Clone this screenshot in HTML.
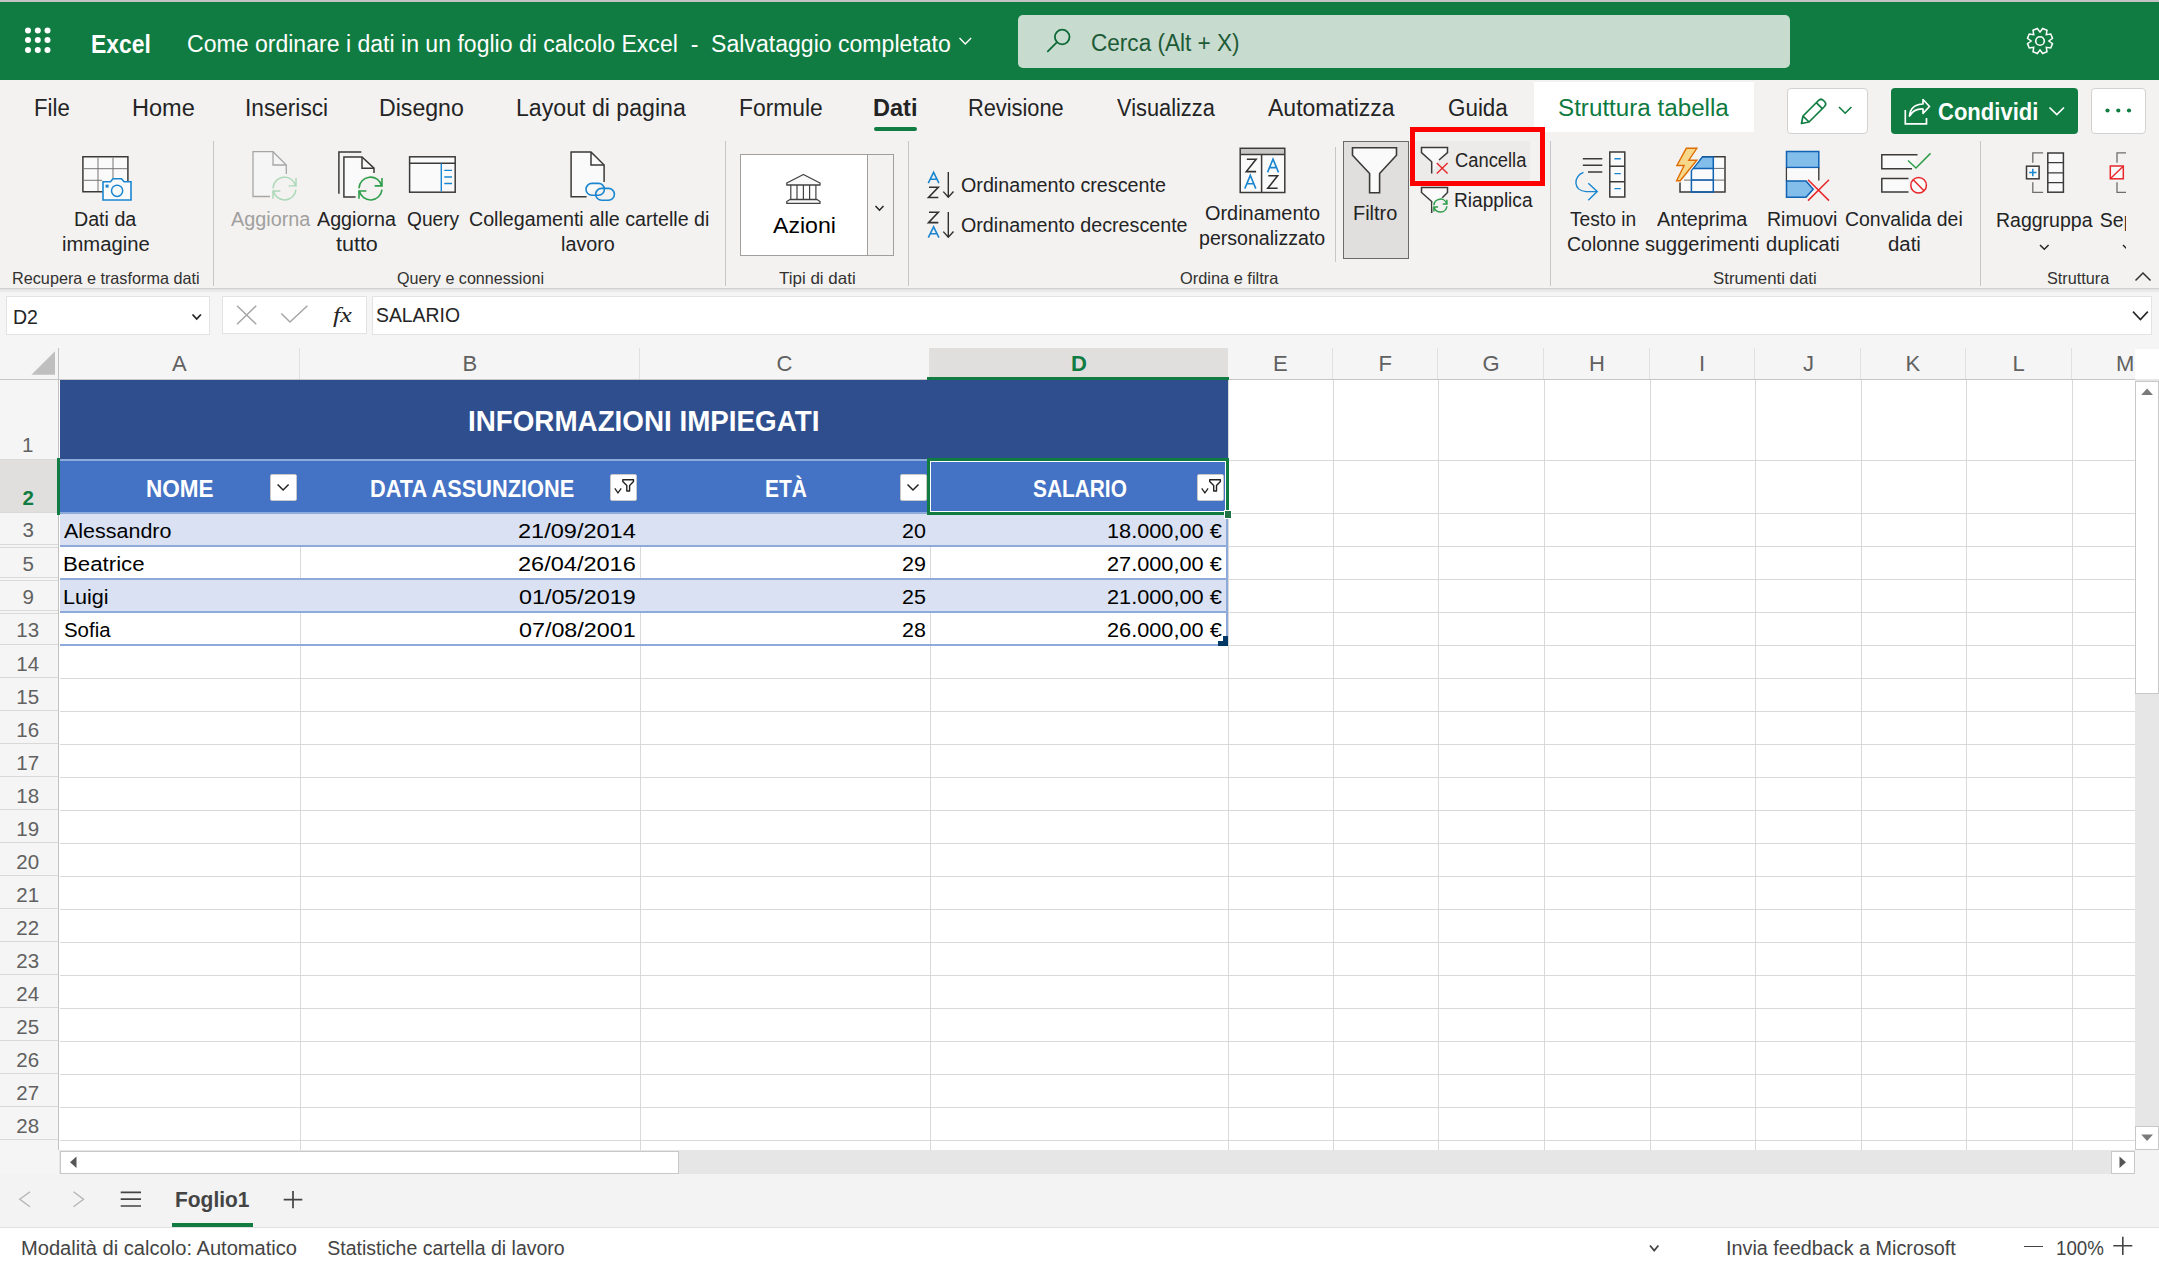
<!DOCTYPE html><html><head><meta charset="utf-8"><title>Excel</title><style>
html,body{margin:0;padding:0;width:2159px;height:1263px;overflow:hidden;background:#fff;}
body{position:relative;font-family:"Liberation Sans",sans-serif;}
.t{position:absolute;white-space:pre;line-height:1;}
svg{overflow:visible}
</style></head><body>
<div style="position:absolute;left:0px;top:0px;width:2159px;height:2px;background:#c4c2c2"></div>
<div style="position:absolute;left:0px;top:2px;width:2159px;height:79px;background:#107c41"></div>
<div class="t" style="left:91.08px;top:32.03px;font-size:25px;color:#fff;font-weight:700;transform:scaleX(0.9150);transform-origin:0 0;">Excel</div>
<div class="t" style="left:187.00px;top:32.53px;font-size:23px;color:#fff;font-weight:400;transform:scaleX(1.0024);transform-origin:0 0;">Come ordinare i dati in un foglio di calcolo Excel&nbsp;&nbsp;-&nbsp;&nbsp;Salvataggio completato</div>
<div style="position:absolute;left:1018px;top:15px;width:772px;height:53px;background:#c7dbcf;border-radius:5px"></div>
<div class="t" style="left:1091.02px;top:31.63px;font-size:23px;color:#1d5a36;font-weight:400;transform:scaleX(0.9813);transform-origin:0 0;">Cerca (Alt + X)</div>
<div style="position:absolute;left:0px;top:80px;width:2159px;height:209px;background:#f3f2f1"></div>
<div style="position:absolute;left:0px;top:288px;width:2159px;height:1px;background:#d2d0ce"></div>
<div style="position:absolute;left:0px;top:289px;width:2159px;height:4px;background:linear-gradient(#e0e0e0,#f5f5f5)"></div>
<div class="t" style="left:34.04px;top:97.23px;font-size:23px;color:#242424;font-weight:400;transform:scaleX(0.9640);transform-origin:0 0;">File</div>
<div class="t" style="left:131.98px;top:97.23px;font-size:23px;color:#242424;font-weight:400;transform:scaleX(1.0242);transform-origin:0 0;">Home</div>
<div class="t" style="left:245.03px;top:97.23px;font-size:23px;color:#242424;font-weight:400;transform:scaleX(0.9847);transform-origin:0 0;">Inserisci</div>
<div class="t" style="left:379.00px;top:97.23px;font-size:23px;color:#242424;font-weight:400;transform:scaleX(1.0049);transform-origin:0 0;">Disegno</div>
<div class="t" style="left:515.99px;top:97.23px;font-size:23px;color:#242424;font-weight:400;transform:scaleX(1.0059);transform-origin:0 0;">Layout di pagina</div>
<div class="t" style="left:739.01px;top:97.23px;font-size:23px;color:#242424;font-weight:400;transform:scaleX(0.9932);transform-origin:0 0;">Formule</div>
<div class="t" style="left:968.05px;top:97.23px;font-size:23px;color:#242424;font-weight:400;transform:scaleX(0.9475);transform-origin:0 0;">Revisione</div>
<div class="t" style="left:1117.00px;top:97.23px;font-size:23px;color:#242424;font-weight:400;transform:scaleX(0.9483);transform-origin:0 0;">Visualizza</div>
<div class="t" style="left:1268.00px;top:97.23px;font-size:23px;color:#242424;font-weight:400;">Automatizza</div>
<div class="t" style="left:1448.03px;top:97.23px;font-size:23px;color:#242424;font-weight:400;transform:scaleX(0.9739);transform-origin:0 0;">Guida</div>
<div class="t" style="left:872.98px;top:97.23px;font-size:23px;color:#242424;font-weight:700;transform:scaleX(1.0229);transform-origin:0 0;">Dati</div>
<div style="position:absolute;left:874px;top:127px;width:43px;height:4px;background:#107c41;border-radius:2px"></div>
<div style="position:absolute;left:1534px;top:82px;width:220px;height:50px;background:#fff"></div>
<div class="t" style="left:1557.95px;top:97.23px;font-size:23px;color:#0e7a3f;font-weight:400;transform:scaleX(1.0521);transform-origin:0 0;">Struttura tabella</div>
<div style="position:absolute;left:1787px;top:88px;width:81px;height:46px;background:#fff;border:1px solid #d1d1d1;border-radius:4px;box-sizing:border-box"></div>
<div style="position:absolute;left:1891px;top:88px;width:187px;height:46px;background:#107c41;border-radius:4px"></div>
<div class="t" style="left:1938.00px;top:101.23px;font-size:23px;color:#fff;font-weight:700;transform:scaleX(0.9576);transform-origin:0 0;">Condividi</div>
<div style="position:absolute;left:2091px;top:88px;width:55px;height:46px;background:#fff;border:1px solid #d1d1d1;border-radius:4px;box-sizing:border-box"></div>
<div style="position:absolute;left:213px;top:141px;width:1px;height:145px;background:#c8c6c4"></div>
<div style="position:absolute;left:725px;top:141px;width:1px;height:145px;background:#c8c6c4"></div>
<div style="position:absolute;left:908px;top:141px;width:1px;height:145px;background:#c8c6c4"></div>
<div style="position:absolute;left:1335px;top:147px;width:1px;height:115px;background:#c8c6c4"></div>
<div style="position:absolute;left:1550px;top:141px;width:1px;height:145px;background:#c8c6c4"></div>
<div style="position:absolute;left:1980px;top:141px;width:1px;height:145px;background:#c8c6c4"></div>
<div class="t" style="left:12.02px;top:270.43px;font-size:16.5px;color:#323130;font-weight:400;transform:scaleX(0.9837);transform-origin:0 0;">Recupera e trasforma dati</div>
<div class="t" style="left:396.70px;top:270.33px;font-size:16.5px;color:#323130;font-weight:400;transform:scaleX(0.9770);transform-origin:0 0;">Query e connessioni</div>
<div class="t" style="left:779.00px;top:270.33px;font-size:16.5px;color:#323130;font-weight:400;transform:scaleX(1.0281);transform-origin:0 0;">Tipi di dati</div>
<div class="t" style="left:1179.50px;top:270.33px;font-size:16.5px;color:#323130;font-weight:400;transform:scaleX(0.9924);transform-origin:0 0;">Ordina e filtra</div>
<div class="t" style="left:1713.00px;top:270.33px;font-size:16.5px;color:#323130;font-weight:400;transform:scaleX(1.0185);transform-origin:0 0;">Strumenti dati</div>
<div class="t" style="left:2046.60px;top:270.03px;font-size:16.5px;color:#323130;font-weight:400;transform:scaleX(0.9844);transform-origin:0 0;">Struttura</div>
<div class="t" style="left:74.29px;top:209.59px;font-size:19.5px;color:#242424;font-weight:400;transform:scaleX(1.0075);transform-origin:0 0;">Dati da</div>
<div class="t" style="left:61.96px;top:234.59px;font-size:19.5px;color:#242424;font-weight:400;transform:scaleX(1.0377);transform-origin:0 0;">immagine</div>
<div class="t" style="left:231.00px;top:209.59px;font-size:19.5px;color:#a19f9d;font-weight:400;transform:scaleX(1.0165);transform-origin:0 0;">Aggiorna</div>
<div class="t" style="left:317.00px;top:209.59px;font-size:19.5px;color:#242424;font-weight:400;transform:scaleX(1.0101);transform-origin:0 0;">Aggiorna</div>
<div class="t" style="left:335.80px;top:234.59px;font-size:19.5px;color:#242424;font-weight:400;transform:scaleX(1.1024);transform-origin:0 0;">tutto</div>
<div class="t" style="left:406.60px;top:209.59px;font-size:19.5px;color:#242424;font-weight:400;transform:scaleX(0.9822);transform-origin:0 0;">Query</div>
<div class="t" style="left:468.50px;top:209.59px;font-size:19.5px;color:#242424;font-weight:400;transform:scaleX(1.0079);transform-origin:0 0;">Collegamenti alle cartelle di</div>
<div class="t" style="left:560.99px;top:234.59px;font-size:19.5px;color:#242424;font-weight:400;transform:scaleX(1.0140);transform-origin:0 0;">lavoro</div>
<div style="position:absolute;left:740px;top:154px;width:154px;height:102px;background:#fff;border:1px solid #a19f9d;box-sizing:border-box"></div>
<div style="position:absolute;left:867px;top:155px;width:26px;height:100px;background:#f3f2f1;border-left:1px solid #a19f9d;box-sizing:border-box"></div>
<div class="t" style="left:773.00px;top:215.47px;font-size:22px;color:#000;font-weight:400;transform:scaleX(1.0503);transform-origin:0 0;">Azioni</div>
<div class="t" style="left:961.00px;top:175.89px;font-size:19.5px;color:#242424;font-weight:400;transform:scaleX(1.0107);transform-origin:0 0;">Ordinamento crescente</div>
<div class="t" style="left:961.00px;top:216.19px;font-size:19.5px;color:#242424;font-weight:400;transform:scaleX(1.0097);transform-origin:0 0;">Ordinamento decrescente</div>
<div class="t" style="left:1204.80px;top:204.19px;font-size:19.5px;color:#242424;font-weight:400;transform:scaleX(1.0206);transform-origin:0 0;">Ordinamento</div>
<div class="t" style="left:1199.00px;top:229.19px;font-size:19.5px;color:#242424;font-weight:400;transform:scaleX(1.0040);transform-origin:0 0;">personalizzato</div>
<div style="position:absolute;left:1343px;top:141px;width:66px;height:118px;background:#e1dfdd;border:1px solid #6b6b6b;box-sizing:border-box"></div>
<div class="t" style="left:1353.28px;top:204.19px;font-size:19.5px;color:#242424;font-weight:400;transform:scaleX(1.0215);transform-origin:0 0;">Filtro</div>
<div style="position:absolute;left:1414px;top:141px;width:116px;height:39px;background:#edebe9"></div>
<div class="t" style="left:1455.00px;top:151.19px;font-size:19.5px;color:#242424;font-weight:400;transform:scaleX(0.9404);transform-origin:0 0;">Cancella</div>
<div class="t" style="left:1454.02px;top:191.39px;font-size:19.5px;color:#242424;font-weight:400;transform:scaleX(0.9790);transform-origin:0 0;">Riapplica</div>
<div style="position:absolute;left:1410px;top:127px;width:135px;height:59px;border:5px solid #ff0000;box-sizing:border-box"></div>
<div class="t" style="left:1570.40px;top:209.59px;font-size:19.5px;color:#242424;font-weight:400;transform:scaleX(0.9841);transform-origin:0 0;">Testo in</div>
<div class="t" style="left:1567.00px;top:234.59px;font-size:19.5px;color:#242424;font-weight:400;">Colonne</div>
<div class="t" style="left:1657.30px;top:209.59px;font-size:19.5px;color:#242424;font-weight:400;transform:scaleX(1.0143);transform-origin:0 0;">Anteprima</div>
<div class="t" style="left:1645.00px;top:234.59px;font-size:19.5px;color:#242424;font-weight:400;transform:scaleX(1.0242);transform-origin:0 0;">suggerimenti</div>
<div class="t" style="left:1767.00px;top:209.59px;font-size:19.5px;color:#242424;font-weight:400;">Rimuovi</div>
<div class="t" style="left:1765.60px;top:234.59px;font-size:19.5px;color:#242424;font-weight:400;transform:scaleX(1.0307);transform-origin:0 0;">duplicati</div>
<div class="t" style="left:1845.40px;top:209.59px;font-size:19.5px;color:#242424;font-weight:400;transform:scaleX(0.9964);transform-origin:0 0;">Convalida dei</div>
<div class="t" style="left:1888.00px;top:234.59px;font-size:19.5px;color:#242424;font-weight:400;transform:scaleX(1.0448);transform-origin:0 0;">dati</div>
<div class="t" style="left:1996.00px;top:210.89px;font-size:19.5px;color:#242424;font-weight:400;">Raggruppa</div>
<div style="position:absolute;left:2090px;top:200px;width:36px;height:40px;overflow:hidden">
<div class="t" style="left:9.80px;top:10.89px;font-size:19.5px;color:#242424;font-weight:400;">Separa</div>
</div>
<div style="position:absolute;left:0px;top:293px;width:2159px;height:56px;background:#f5f5f5"></div>
<div style="position:absolute;left:6px;top:296px;width:204px;height:39px;background:#fff;border:1px solid #e3e3e3;box-sizing:border-box"></div>
<div class="t" style="left:12.90px;top:308.19px;font-size:19.5px;color:#242424;font-weight:400;">D2</div>
<div style="position:absolute;left:222px;top:296px;width:145px;height:38px;background:#fff;border:1px solid #e3e3e3;box-sizing:border-box"></div>
<div class="t" style="left:332.80px;top:303.77px;font-size:22px;color:#242424;font-weight:400;font-family:'Liberation Serif';font-style:italic;transform:scaleX(1.1854);transform-origin:0 0;">fx</div>
<div style="position:absolute;left:372px;top:296px;width:1780px;height:39px;background:#fff;border:1px solid #e3e3e3;box-sizing:border-box"></div>
<div class="t" style="left:376.30px;top:304.97px;font-size:20px;color:#242424;font-weight:400;transform:scaleX(0.9682);transform-origin:0 0;">SALARIO</div>
<div style="position:absolute;left:0px;top:349px;width:2135px;height:30px;background:#f5f5f5"></div>
<div style="position:absolute;left:0px;top:380px;width:58px;height:770px;background:#f5f5f5"></div>
<div style="position:absolute;left:59px;top:380px;width:2076px;height:770px;background:#fff"></div>
<div style="position:absolute;left:930px;top:348px;width:297px;height:31px;background:#e1dfdd"></div>
<div style="position:absolute;left:0px;top:460px;width:58px;height:52px;background:#e1dfdd"></div>
<div style="position:absolute;left:300px;top:380px;width:1px;height:770px;background:#d9d9d9"></div>
<div style="position:absolute;left:299px;top:348px;width:1px;height:31px;background:#e0e0e0"></div>
<div style="position:absolute;left:640px;top:380px;width:1px;height:770px;background:#d9d9d9"></div>
<div style="position:absolute;left:639px;top:348px;width:1px;height:31px;background:#e0e0e0"></div>
<div style="position:absolute;left:930px;top:380px;width:1px;height:770px;background:#d9d9d9"></div>
<div style="position:absolute;left:929px;top:348px;width:1px;height:31px;background:#e0e0e0"></div>
<div style="position:absolute;left:1228px;top:380px;width:1px;height:770px;background:#d9d9d9"></div>
<div style="position:absolute;left:1227px;top:348px;width:1px;height:31px;background:#e0e0e0"></div>
<div style="position:absolute;left:1333px;top:380px;width:1px;height:770px;background:#d9d9d9"></div>
<div style="position:absolute;left:1332px;top:348px;width:1px;height:31px;background:#e0e0e0"></div>
<div style="position:absolute;left:1438px;top:380px;width:1px;height:770px;background:#d9d9d9"></div>
<div style="position:absolute;left:1437px;top:348px;width:1px;height:31px;background:#e0e0e0"></div>
<div style="position:absolute;left:1544px;top:380px;width:1px;height:770px;background:#d9d9d9"></div>
<div style="position:absolute;left:1543px;top:348px;width:1px;height:31px;background:#e0e0e0"></div>
<div style="position:absolute;left:1650px;top:380px;width:1px;height:770px;background:#d9d9d9"></div>
<div style="position:absolute;left:1649px;top:348px;width:1px;height:31px;background:#e0e0e0"></div>
<div style="position:absolute;left:1755px;top:380px;width:1px;height:770px;background:#d9d9d9"></div>
<div style="position:absolute;left:1754px;top:348px;width:1px;height:31px;background:#e0e0e0"></div>
<div style="position:absolute;left:1861px;top:380px;width:1px;height:770px;background:#d9d9d9"></div>
<div style="position:absolute;left:1860px;top:348px;width:1px;height:31px;background:#e0e0e0"></div>
<div style="position:absolute;left:1966px;top:380px;width:1px;height:770px;background:#d9d9d9"></div>
<div style="position:absolute;left:1965px;top:348px;width:1px;height:31px;background:#e0e0e0"></div>
<div style="position:absolute;left:2072px;top:380px;width:1px;height:770px;background:#d9d9d9"></div>
<div style="position:absolute;left:2071px;top:348px;width:1px;height:31px;background:#e0e0e0"></div>
<div style="position:absolute;left:60px;top:460px;width:2075px;height:1px;background:#d9d9d9"></div>
<div style="position:absolute;left:0px;top:459px;width:58px;height:1px;background:#d9d9d9"></div>
<div style="position:absolute;left:60px;top:513px;width:2075px;height:1px;background:#d9d9d9"></div>
<div style="position:absolute;left:0px;top:512px;width:58px;height:1px;background:#d9d9d9"></div>
<div style="position:absolute;left:60px;top:546px;width:2075px;height:1px;background:#d9d9d9"></div>
<div style="position:absolute;left:0px;top:545px;width:58px;height:1px;background:#d9d9d9"></div>
<div style="position:absolute;left:60px;top:579px;width:2075px;height:1px;background:#d9d9d9"></div>
<div style="position:absolute;left:0px;top:578px;width:58px;height:1px;background:#d9d9d9"></div>
<div style="position:absolute;left:60px;top:612px;width:2075px;height:1px;background:#d9d9d9"></div>
<div style="position:absolute;left:0px;top:611px;width:58px;height:1px;background:#d9d9d9"></div>
<div style="position:absolute;left:60px;top:645px;width:2075px;height:1px;background:#d9d9d9"></div>
<div style="position:absolute;left:0px;top:644px;width:58px;height:1px;background:#d9d9d9"></div>
<div style="position:absolute;left:60px;top:678px;width:2075px;height:1px;background:#d9d9d9"></div>
<div style="position:absolute;left:0px;top:677px;width:58px;height:1px;background:#d9d9d9"></div>
<div style="position:absolute;left:60px;top:711px;width:2075px;height:1px;background:#d9d9d9"></div>
<div style="position:absolute;left:0px;top:710px;width:58px;height:1px;background:#d9d9d9"></div>
<div style="position:absolute;left:60px;top:744px;width:2075px;height:1px;background:#d9d9d9"></div>
<div style="position:absolute;left:0px;top:743px;width:58px;height:1px;background:#d9d9d9"></div>
<div style="position:absolute;left:60px;top:777px;width:2075px;height:1px;background:#d9d9d9"></div>
<div style="position:absolute;left:0px;top:776px;width:58px;height:1px;background:#d9d9d9"></div>
<div style="position:absolute;left:60px;top:810px;width:2075px;height:1px;background:#d9d9d9"></div>
<div style="position:absolute;left:0px;top:809px;width:58px;height:1px;background:#d9d9d9"></div>
<div style="position:absolute;left:60px;top:843px;width:2075px;height:1px;background:#d9d9d9"></div>
<div style="position:absolute;left:0px;top:842px;width:58px;height:1px;background:#d9d9d9"></div>
<div style="position:absolute;left:60px;top:876px;width:2075px;height:1px;background:#d9d9d9"></div>
<div style="position:absolute;left:0px;top:875px;width:58px;height:1px;background:#d9d9d9"></div>
<div style="position:absolute;left:60px;top:909px;width:2075px;height:1px;background:#d9d9d9"></div>
<div style="position:absolute;left:0px;top:908px;width:58px;height:1px;background:#d9d9d9"></div>
<div style="position:absolute;left:60px;top:942px;width:2075px;height:1px;background:#d9d9d9"></div>
<div style="position:absolute;left:0px;top:941px;width:58px;height:1px;background:#d9d9d9"></div>
<div style="position:absolute;left:60px;top:975px;width:2075px;height:1px;background:#d9d9d9"></div>
<div style="position:absolute;left:0px;top:974px;width:58px;height:1px;background:#d9d9d9"></div>
<div style="position:absolute;left:60px;top:1008px;width:2075px;height:1px;background:#d9d9d9"></div>
<div style="position:absolute;left:0px;top:1007px;width:58px;height:1px;background:#d9d9d9"></div>
<div style="position:absolute;left:60px;top:1041px;width:2075px;height:1px;background:#d9d9d9"></div>
<div style="position:absolute;left:0px;top:1040px;width:58px;height:1px;background:#d9d9d9"></div>
<div style="position:absolute;left:60px;top:1074px;width:2075px;height:1px;background:#d9d9d9"></div>
<div style="position:absolute;left:0px;top:1073px;width:58px;height:1px;background:#d9d9d9"></div>
<div style="position:absolute;left:60px;top:1107px;width:2075px;height:1px;background:#d9d9d9"></div>
<div style="position:absolute;left:0px;top:1106px;width:58px;height:1px;background:#d9d9d9"></div>
<div style="position:absolute;left:60px;top:1140px;width:2075px;height:1px;background:#d9d9d9"></div>
<div style="position:absolute;left:0px;top:1139px;width:58px;height:1px;background:#d9d9d9"></div>
<div style="position:absolute;left:0px;top:544px;width:58px;height:1px;background:#d9d9d9"></div>
<div style="position:absolute;left:0px;top:547px;width:58px;height:1px;background:#d9d9d9"></div>
<div style="position:absolute;left:0px;top:545px;width:58px;height:2px;background:#f5f5f5"></div>
<div style="position:absolute;left:0px;top:577px;width:58px;height:1px;background:#d9d9d9"></div>
<div style="position:absolute;left:0px;top:580px;width:58px;height:1px;background:#d9d9d9"></div>
<div style="position:absolute;left:0px;top:578px;width:58px;height:2px;background:#f5f5f5"></div>
<div style="position:absolute;left:0px;top:610px;width:58px;height:1px;background:#d9d9d9"></div>
<div style="position:absolute;left:0px;top:613px;width:58px;height:1px;background:#d9d9d9"></div>
<div style="position:absolute;left:0px;top:611px;width:58px;height:2px;background:#f5f5f5"></div>
<div style="position:absolute;left:58px;top:348px;width:1px;height:802px;background:#c2c2c2"></div>
<div style="position:absolute;left:0px;top:379px;width:2135px;height:1px;background:#c6c6c6"></div>
<div class="t" style="left:172.00px;top:352.87px;font-size:22px;color:#616161;font-weight:400;">A</div>
<div class="t" style="left:462.50px;top:352.87px;font-size:22px;color:#616161;font-weight:400;">B</div>
<div class="t" style="left:776.50px;top:352.87px;font-size:22px;color:#616161;font-weight:400;">C</div>
<div class="t" style="left:1071.00px;top:352.87px;font-size:22px;color:#107c41;font-weight:700;">D</div>
<div class="t" style="left:1273.00px;top:352.87px;font-size:22px;color:#616161;font-weight:400;">E</div>
<div class="t" style="left:1378.50px;top:352.87px;font-size:22px;color:#616161;font-weight:400;">F</div>
<div class="t" style="left:1482.50px;top:352.87px;font-size:22px;color:#616161;font-weight:400;">G</div>
<div class="t" style="left:1589.00px;top:352.87px;font-size:22px;color:#616161;font-weight:400;">H</div>
<div class="t" style="left:1699.00px;top:352.87px;font-size:22px;color:#616161;font-weight:400;">I</div>
<div class="t" style="left:1803.00px;top:352.87px;font-size:22px;color:#616161;font-weight:400;">J</div>
<div class="t" style="left:1905.50px;top:352.87px;font-size:22px;color:#616161;font-weight:400;">K</div>
<div class="t" style="left:2012.50px;top:352.87px;font-size:22px;color:#616161;font-weight:400;">L</div>
<div class="t" style="left:2116.00px;top:352.87px;font-size:22px;color:#616161;font-weight:400;">M</div>
<div class="t" style="left:22.00px;top:434.84px;font-size:20.5px;color:#616161;font-weight:400;">1</div>
<div class="t" style="left:22.50px;top:487.94px;font-size:20.5px;color:#107c41;font-weight:700;">2</div>
<div class="t" style="left:22.50px;top:519.64px;font-size:20.5px;color:#616161;font-weight:400;">3</div>
<div class="t" style="left:22.50px;top:553.54px;font-size:20.5px;color:#616161;font-weight:400;">5</div>
<div class="t" style="left:22.50px;top:587.34px;font-size:20.5px;color:#616161;font-weight:400;">9</div>
<div class="t" style="left:16.30px;top:620.14px;font-size:20.5px;color:#616161;font-weight:400;">13</div>
<div class="t" style="left:16.30px;top:653.84px;font-size:20.5px;color:#616161;font-weight:400;">14</div>
<div class="t" style="left:16.30px;top:686.84px;font-size:20.5px;color:#616161;font-weight:400;">15</div>
<div class="t" style="left:16.30px;top:719.84px;font-size:20.5px;color:#616161;font-weight:400;">16</div>
<div class="t" style="left:16.30px;top:752.84px;font-size:20.5px;color:#616161;font-weight:400;">17</div>
<div class="t" style="left:16.30px;top:785.84px;font-size:20.5px;color:#616161;font-weight:400;">18</div>
<div class="t" style="left:16.30px;top:818.84px;font-size:20.5px;color:#616161;font-weight:400;">19</div>
<div class="t" style="left:16.30px;top:851.84px;font-size:20.5px;color:#616161;font-weight:400;">20</div>
<div class="t" style="left:16.30px;top:884.84px;font-size:20.5px;color:#616161;font-weight:400;">21</div>
<div class="t" style="left:16.30px;top:917.84px;font-size:20.5px;color:#616161;font-weight:400;">22</div>
<div class="t" style="left:16.30px;top:950.84px;font-size:20.5px;color:#616161;font-weight:400;">23</div>
<div class="t" style="left:16.30px;top:983.84px;font-size:20.5px;color:#616161;font-weight:400;">24</div>
<div class="t" style="left:16.30px;top:1016.84px;font-size:20.5px;color:#616161;font-weight:400;">25</div>
<div class="t" style="left:16.30px;top:1049.84px;font-size:20.5px;color:#616161;font-weight:400;">26</div>
<div class="t" style="left:16.30px;top:1082.84px;font-size:20.5px;color:#616161;font-weight:400;">27</div>
<div class="t" style="left:16.30px;top:1115.84px;font-size:20.5px;color:#616161;font-weight:400;">28</div>
<div style="position:absolute;left:57px;top:458px;width:3px;height:57px;background:#107c41"></div>
<div style="position:absolute;left:927px;top:377px;width:302px;height:3px;background:#107c41"></div>
<div style="position:absolute;left:60px;top:380px;width:1168px;height:79px;background:#2f4e8e"></div>
<div class="t" style="left:468.34px;top:407.45px;font-size:29px;color:#fff;font-weight:700;transform:scaleX(0.9580);transform-origin:0 0;">INFORMAZIONI IMPIEGATI</div>
<div style="position:absolute;left:60px;top:459px;width:1168px;height:2px;background:#8eaadb"></div>
<div style="position:absolute;left:60px;top:461px;width:1168px;height:51px;background:#4472c4"></div>
<div class="t" style="left:145.76px;top:476.88px;font-size:24px;color:#fff;font-weight:700;transform:scaleX(0.9395);transform-origin:0 0;">NOME</div>
<div class="t" style="left:369.79px;top:476.88px;font-size:24px;color:#fff;font-weight:700;transform:scaleX(0.9062);transform-origin:0 0;">DATA ASSUNZIONE</div>
<div class="t" style="left:1032.70px;top:476.88px;font-size:24px;color:#fff;font-weight:700;transform:scaleX(0.8693);transform-origin:0 0;">SALARIO</div>
<div class="t" style="left:765.03px;top:476.88px;font-size:24px;color:#fff;font-weight:700;transform:scaleX(0.8743);transform-origin:0 0;">ET&Agrave;</div>
<div style="position:absolute;left:269.6px;top:473.5px;width:27px;height:27px;background:#fff;border:1px solid #c8c8c8;border-radius:2px;box-sizing:border-box"></div>
<div style="position:absolute;left:609.6px;top:473.5px;width:27px;height:27px;background:#fff;border:1px solid #c8c8c8;border-radius:2px;box-sizing:border-box"></div>
<div style="position:absolute;left:899.5px;top:473.5px;width:27px;height:27px;background:#fff;border:1px solid #c8c8c8;border-radius:2px;box-sizing:border-box"></div>
<div style="position:absolute;left:1196.5px;top:473.5px;width:27px;height:27px;background:#fff;border:1px solid #c8c8c8;border-radius:2px;box-sizing:border-box"></div>
<div style="position:absolute;left:60px;top:514px;width:1168px;height:32px;background:#d9e1f2"></div>
<div class="t" style="left:63.60px;top:520.94px;font-size:20.5px;color:#000;font-weight:400;transform:scaleX(1.0474);transform-origin:0 0;">Alessandro</div>
<div class="t" style="left:517.65px;top:520.94px;font-size:20.5px;color:#000;font-weight:400;transform:scaleX(1.1482);transform-origin:0 0;">21/09/2014</div>
<div class="t" style="left:901.85px;top:520.94px;font-size:20.5px;color:#000;font-weight:400;transform:scaleX(1.0467);transform-origin:0 0;">20</div>
<div class="t" style="left:1107.14px;top:520.94px;font-size:20.5px;color:#000;font-weight:400;transform:scaleX(1.0594);transform-origin:0 0;">18.000,00 &euro;</div>
<div class="t" style="left:62.51px;top:553.74px;font-size:20.5px;color:#000;font-weight:400;transform:scaleX(1.0853);transform-origin:0 0;">Beatrice</div>
<div class="t" style="left:517.65px;top:553.74px;font-size:20.5px;color:#000;font-weight:400;transform:scaleX(1.1482);transform-origin:0 0;">26/04/2016</div>
<div class="t" style="left:901.85px;top:553.74px;font-size:20.5px;color:#000;font-weight:400;transform:scaleX(1.0467);transform-origin:0 0;">29</div>
<div class="t" style="left:1107.14px;top:553.74px;font-size:20.5px;color:#000;font-weight:400;transform:scaleX(1.0594);transform-origin:0 0;">27.000,00 &euro;</div>
<div style="position:absolute;left:60px;top:580px;width:1168px;height:32px;background:#d9e1f2"></div>
<div class="t" style="left:62.55px;top:587.24px;font-size:20.5px;color:#000;font-weight:400;transform:scaleX(1.0537);transform-origin:0 0;">Luigi</div>
<div class="t" style="left:518.80px;top:587.24px;font-size:20.5px;color:#000;font-weight:400;transform:scaleX(1.1370);transform-origin:0 0;">01/05/2019</div>
<div class="t" style="left:901.85px;top:587.24px;font-size:20.5px;color:#000;font-weight:400;transform:scaleX(1.0467);transform-origin:0 0;">25</div>
<div class="t" style="left:1107.14px;top:587.24px;font-size:20.5px;color:#000;font-weight:400;transform:scaleX(1.0594);transform-origin:0 0;">21.000,00 &euro;</div>
<div class="t" style="left:63.60px;top:620.04px;font-size:20.5px;color:#000;font-weight:400;transform:scaleX(0.9953);transform-origin:0 0;">Sofia</div>
<div class="t" style="left:518.80px;top:620.04px;font-size:20.5px;color:#000;font-weight:400;transform:scaleX(1.1370);transform-origin:0 0;">07/08/2001</div>
<div class="t" style="left:901.85px;top:620.04px;font-size:20.5px;color:#000;font-weight:400;transform:scaleX(1.0467);transform-origin:0 0;">28</div>
<div class="t" style="left:1107.14px;top:620.04px;font-size:20.5px;color:#000;font-weight:400;transform:scaleX(1.0594);transform-origin:0 0;">26.000,00 &euro;</div>
<div style="position:absolute;left:60px;top:512px;width:1168px;height:2px;background:#8eaadb"></div>
<div style="position:absolute;left:60px;top:545px;width:1168px;height:2px;background:#8eaadb"></div>
<div style="position:absolute;left:60px;top:578px;width:1168px;height:2px;background:#8eaadb"></div>
<div style="position:absolute;left:60px;top:611px;width:1168px;height:2px;background:#8eaadb"></div>
<div style="position:absolute;left:60px;top:644px;width:1168px;height:2px;background:#8eaadb"></div>
<div style="position:absolute;left:1226px;top:514px;width:2px;height:132px;background:#8eaadb"></div>
<div style="position:absolute;left:927px;top:458px;width:302px;height:57px;border:3px solid #107c41;box-sizing:border-box"></div>
<div style="position:absolute;left:930px;top:461px;width:296px;height:51px;border:1px solid #fff;box-sizing:border-box"></div>
<div style="position:absolute;left:1224px;top:510px;width:8px;height:9px;background:#217346;border:1px solid #fff;box-sizing:border-box"></div>
<div style="position:absolute;left:1218px;top:636px;width:10px;height:10px;background:#003764"></div>
<div style="position:absolute;left:1218px;top:636px;width:5.3px;height:5px;background:#fff"></div>
<div style="position:absolute;left:2135px;top:379px;width:24px;height:771px;background:#e6e6e6"></div>
<div style="position:absolute;left:2135px;top:380.5px;width:24px;height:25px;background:#fff;border:1px solid #c8c8c8;box-sizing:border-box"></div>
<div style="position:absolute;left:2135px;top:404.5px;width:24px;height:289px;background:#fff;border:1px solid #c8c8c8;border-top:none;box-sizing:border-box"></div>
<div style="position:absolute;left:2135px;top:1125.5px;width:24px;height:24.5px;background:#fff;border:1px solid #c8c8c8;box-sizing:border-box"></div>
<div style="position:absolute;left:0px;top:1150px;width:2135px;height:24px;background:#f5f5f5"></div>
<div style="position:absolute;left:59px;top:1150px;width:2076px;height:24px;background:#e6e6e6"></div>
<div style="position:absolute;left:60px;top:1150.5px;width:25px;height:23.5px;background:#fff;border:1px solid #c8c8c8;box-sizing:border-box"></div>
<div style="position:absolute;left:84px;top:1150.5px;width:595px;height:23.5px;background:#fff;border:1px solid #c8c8c8;border-left:none;box-sizing:border-box"></div>
<div style="position:absolute;left:2111px;top:1150.5px;width:24px;height:23.5px;background:#fff;border:1px solid #c8c8c8;box-sizing:border-box"></div>
<div style="position:absolute;left:2135px;top:1150px;width:24px;height:24px;background:#f3f3f3"></div>
<div style="position:absolute;left:0px;top:1174px;width:2159px;height:53px;background:#f3f3f3"></div>
<div style="position:absolute;left:0px;top:1227px;width:2159px;height:1px;background:#e1e1e1"></div>
<div class="t" style="left:175.05px;top:1189.37px;font-size:22px;color:#444;font-weight:700;transform:scaleX(0.9522);transform-origin:0 0;">Foglio1</div>
<div style="position:absolute;left:172px;top:1222.7px;width:81px;height:4px;background:#107c41"></div>
<div style="position:absolute;left:0px;top:1228px;width:2159px;height:35px;background:#fff"></div>
<div class="t" style="left:20.97px;top:1239.19px;font-size:19.5px;color:#444;font-weight:400;transform:scaleX(1.0311);transform-origin:0 0;">Modalit&agrave; di calcolo: Automatico</div>
<div class="t" style="left:327.30px;top:1239.19px;font-size:19.5px;color:#444;font-weight:400;">Statistiche cartella di lavoro</div>
<div class="t" style="left:1726.29px;top:1239.19px;font-size:19.5px;color:#444;font-weight:400;transform:scaleX(1.0146);transform-origin:0 0;">Invia feedback a Microsoft</div>
<div style="position:absolute;left:2024px;top:1245.5px;width:19px;height:1.6px;background:#444"></div>
<div class="t" style="left:2055.74px;top:1239.19px;font-size:19.5px;color:#444;font-weight:400;transform:scaleX(0.9601);transform-origin:0 0;">100%</div>
<svg style="position:absolute;left:0;top:0;pointer-events:none" width="2159" height="1263" viewBox="0 0 2159 1263"><circle cx="28" cy="30.4" r="3" fill="#fff"/><circle cx="28" cy="40.1" r="3" fill="#fff"/><circle cx="28" cy="49.9" r="3" fill="#fff"/><circle cx="37.8" cy="30.4" r="3" fill="#fff"/><circle cx="37.8" cy="40.1" r="3" fill="#fff"/><circle cx="37.8" cy="49.9" r="3" fill="#fff"/><circle cx="47.5" cy="30.4" r="3" fill="#fff"/><circle cx="47.5" cy="40.1" r="3" fill="#fff"/><circle cx="47.5" cy="49.9" r="3" fill="#fff"/><path d="M959.5 38 L965.3 44 L971.1 38" stroke="#fff" stroke-width="1.4" fill="none"/><circle cx="1062.2" cy="37" r="7.3" stroke="#0d6a36" stroke-width="1.8" fill="none"/><path d="M1056.8 42.4 L1047.8 51.3" stroke="#0d6a36" stroke-width="1.8" stroke-linecap="round"/><polygon points="2040.00,32.10 2042.66,28.48 2046.97,30.27 2046.29,34.71 2050.73,34.03 2052.52,38.34 2048.90,41.00 2052.52,43.66 2050.73,47.97 2046.29,47.29 2046.97,51.73 2042.66,53.52 2040.00,49.90 2037.34,53.52 2033.03,51.73 2033.71,47.29 2029.27,47.97 2027.48,43.66 2031.10,41.00 2027.48,38.34 2029.27,34.03 2033.71,34.71 2033.03,30.27 2037.34,28.48" fill="none" stroke="#fff" stroke-width="1.5" stroke-linejoin="miter"/><circle cx="2040" cy="41" r="4.3" fill="none" stroke="#fff" stroke-width="1.6"/><path d="M1801.5 123.5 L1803 116 L1818.5 100.5 Q1821 98 1823.5 100.5 L1824.5 101.5 Q1827 104 1824.5 106.5 L1809 122 Z M1803 116 L1809 122 M1816.3 102.7 L1822.3 108.7" stroke="#107c41" stroke-width="1.7" fill="none" stroke-linejoin="round"/><path d="M1839 107 L1845.2 113.2 L1851.4 107" stroke="#107c41" stroke-width="1.6" fill="none"/><path d="M1905.3 110 V123.8 H1926.5 V118" stroke="#fff" stroke-width="1.7" fill="none"/><path d="M1909.5 116 Q1910.5 104.5 1923 104 V99.5 L1929.5 106.5 L1923 113.3 V109 Q1914 108.5 1909.5 116 Z" stroke="#fff" stroke-width="1.7" fill="none" stroke-linejoin="round"/><path d="M2049.5 107.5 L2056.8 114.5 L2064 107.5" stroke="#fff" stroke-width="1.7" fill="none"/><circle cx="2107.5" cy="110.5" r="2.1" fill="#107c41"/><circle cx="2118.3" cy="110.5" r="2.1" fill="#107c41"/><circle cx="2129" cy="110.5" r="2.1" fill="#107c41"/><path d="M2135.5 280.5 L2143 273 L2150.5 280.5" stroke="#323130" stroke-width="1.5" fill="none"/><path d="M102.5 191.8 H82.9 V156.8 H127.9 V181" fill="#fafafa" stroke="#3b3a39" stroke-width="1.5"/><path d="M98 157.5 V191 M113 157.5 V178 M83.5 168.7 H127 M83.5 180.3 H102" stroke="#7a7574" stroke-width="1" fill="none"/><path d="M103 181.8 H110.5 L113 178.7 H121.5 L124 181.8 H131 V200 H103 Z" fill="#fafafa" stroke="#1a86d0" stroke-width="1.6"/><circle cx="117.1" cy="190.8" r="5.6" fill="none" stroke="#1a86d0" stroke-width="1.5"/><rect x="105.6" y="184.6" width="3" height="3" fill="#1a86d0"/><path d="M270 196.5 H253 V151.7 H273 L286.3 165 V174" fill="#f5f5f5" stroke="#a6a6a6" stroke-width="1.3"/><path d="M273 151.7 V165 H286.3" fill="none" stroke="#a6a6a6" stroke-width="1.3"/><circle cx="284.5" cy="188.5" r="13" fill="#f3f2f1"/><path d="M273.00 188.20 A11.5 11.5 0 0 1 295.65 185.85" fill="none" stroke="#a9d8b6" stroke-width="1.4"/><path d="M296.00 178.03 V185.85 H288.64" fill="none" stroke="#a9d8b6" stroke-width="1.4"/><path d="M296.00 189.65 A11.5 11.5 0 0 1 273.35 191.03" fill="none" stroke="#a9d8b6" stroke-width="1.4"/><path d="M273.00 198.85 V191.03 H280.36" fill="none" stroke="#a9d8b6" stroke-width="1.4"/><path d="M338.9 193.8 V152 H361.4" fill="none" stroke="#3b3a39" stroke-width="1.5"/><path d="M355.6 197 H343.9 V157 H362 L374 168.2 V173" fill="#fafafa" stroke="#3b3a39" stroke-width="1.5"/><path d="M362 157 V168.2 H374" fill="none" stroke="#3b3a39" stroke-width="1.5"/><circle cx="370.5" cy="188.5" r="13" fill="#f3f2f1"/><path d="M359.00 188.20 A11.5 11.5 0 0 1 381.65 185.85" fill="none" stroke="#2e9e4a" stroke-width="1.6"/><path d="M382.00 178.03 V185.85 H374.64" fill="none" stroke="#2e9e4a" stroke-width="1.6"/><path d="M382.00 189.65 A11.5 11.5 0 0 1 359.35 191.03" fill="none" stroke="#2e9e4a" stroke-width="1.6"/><path d="M359.00 198.85 V191.03 H366.36" fill="none" stroke="#2e9e4a" stroke-width="1.6"/><rect x="409.6" y="156.8" width="45.6" height="35.4" fill="#fafafa" stroke="#3b3a39" stroke-width="1.5"/><path d="M410 163.2 H455" stroke="#3b3a39" stroke-width="1.5"/><path d="M441.3 163.5 V191.5" stroke="#1a86d0" stroke-width="1.4"/><path d="M444.3 170.4 H452 M444.3 177 H452 M444.3 183.5 H452" stroke="#1a86d0" stroke-width="1.3"/><path d="M586.6 196.8 H571.1 V151.9 H591 L604.1 165 V182" fill="#fafafa" stroke="#3b3a39" stroke-width="1.5"/><path d="M591 151.9 V165 H604.1" fill="none" stroke="#3b3a39" stroke-width="1.5"/><rect x="586" y="183.4" width="18.4" height="11.8" rx="5.9" fill="none" stroke="#1a86d0" stroke-width="1.6"/><rect x="595.7" y="188.4" width="18.7" height="11.8" rx="5.9" fill="none" stroke="#1a86d0" stroke-width="1.6"/><path d="M803.4 174.5 L820 183 V185 H786.8 V183 Z" fill="#fafafa" stroke="#424242" stroke-width="1.3" stroke-linejoin="round"/><path d="M790.8 185 V199.5 M797 185 V199.5 M803.4 185 V199.5 M809.6 185 V199.5 M815.9 185 V199.5" stroke="#424242" stroke-width="1.2"/><path d="M790 199.5 H817 L820 201.5 V203.4 H786.8 V201.5 Z" fill="#fafafa" stroke="#424242" stroke-width="1.3" stroke-linejoin="round"/><path d="M875.5 206 L879.5 210.2 L883.5 206" fill="none" stroke="#242424" stroke-width="1.5"/><path d="M928.3 183.1 L933.6 172.3 L938.9 183.1 M930.4 179.2 H936.8" fill="none" stroke="#1a86d0" stroke-width="1.6"/><path d="M929.0 187.2 H938.3 L928.5 197.5 H938.3" fill="none" stroke="#323130" stroke-width="1.6"/><path d="M948.3 172 V197 M943.3 191.6 L948.3 197.2 L953.5 191.6" fill="none" stroke="#323130" stroke-width="1.4"/><path d="M929.0 212.3 H938.3 L928.5 222.6 H938.3" fill="none" stroke="#323130" stroke-width="1.6"/><path d="M928.3 237.6 L933.6 226.8 L938.9 237.6 M930.4 233.7 H936.8" fill="none" stroke="#1a86d0" stroke-width="1.6"/><path d="M948.3 212 V237 M943.3 231.6 L948.3 237.2 L953.5 231.6" fill="none" stroke="#323130" stroke-width="1.4"/><rect x="1240.2" y="148.3" width="44.6" height="44.2" fill="#fafafa" stroke="#3b3a39" stroke-width="1.5"/><rect x="1241" y="149" width="43" height="5.5" fill="#c8c6c4"/><path d="M1240.5 154.5 H1285 M1261.6 154.5 V192.5" stroke="#3b3a39" stroke-width="1.5"/><path d="M1246.8 159.3 H1256.1 L1246.3 171.6 H1256.1" fill="none" stroke="#323130" stroke-width="1.6"/><path d="M1244.8 188.6 L1250.3 175.4 L1255.8 188.6 M1247.0 183.8 H1253.6" fill="none" stroke="#1a86d0" stroke-width="1.6"/><path d="M1267.5 172.4 L1273.0 159.2 L1278.5 172.4 M1269.7 167.6 H1276.3" fill="none" stroke="#1a86d0" stroke-width="1.6"/><path d="M1268.3 175.8 H1277.6 L1267.8 188.3 H1277.6" fill="none" stroke="#323130" stroke-width="1.6"/><path d="M1352.5 147.8 H1396.5 V155.2 L1379.6 173.5 V192.8 H1369.6 V173.5 L1352.5 155.2 Z" fill="#fafafa" stroke="#3b3a39" stroke-width="1.6"/><path d="M1431.7 173.5 V161.8 L1421.5 152.6 V147.5 H1447.5 V152.6 L1439 160" fill="#fafafa" stroke="#3b3a39" stroke-width="1.5"/><path d="M1436.8 163 L1447.6 173.5 M1447.6 163 L1436.8 173.5" stroke="#e8262b" stroke-width="1.4"/><path d="M1431.7 213 V201.5 L1421.5 192.5 V187.5 H1447.5 V192.5 L1442 198" fill="#fafafa" stroke="#3b3a39" stroke-width="1.5"/><circle cx="1440.4" cy="205.6" r="8" fill="#f3f2f1"/><path d="M1433.90 205.30 A6.5 6.5 0 0 1 1446.71 204.10" fill="none" stroke="#2e9e4a" stroke-width="1.5"/><path d="M1446.90 199.69 V204.10 H1442.74" fill="none" stroke="#2e9e4a" stroke-width="1.5"/><path d="M1446.90 206.25 A6.5 6.5 0 0 1 1434.10 207.03" fill="none" stroke="#2e9e4a" stroke-width="1.5"/><path d="M1433.90 211.45 V207.03 H1438.06" fill="none" stroke="#2e9e4a" stroke-width="1.5"/><path d="M1582.8 158.8 H1602.3 M1582.8 165.3 H1602.3 M1588 172 H1602.3" stroke="#3b3a39" stroke-width="1.5"/><rect x="1609.8" y="152" width="15" height="45" fill="#fafafa" stroke="#3b3a39" stroke-width="1.5"/><path d="M1610 166.3 H1625 M1610 181.7 H1625" stroke="#3b3a39" stroke-width="1.5"/><path d="M1614.4 158.8 H1620.8 M1614.4 173.6 H1620.8 M1614.4 188.6 H1620.8" stroke="#1a86d0" stroke-width="1.4"/><path d="M1583.5 172.4 C1573 176 1573 191 1586 191.6 H1597" fill="none" stroke="#1a86d0" stroke-width="1.4"/><path d="M1588.3 183.3 L1597.2 191.6 L1588.3 200.2" fill="none" stroke="#1a86d0" stroke-width="1.4"/><path d="M1680 192 V180 L1691.4 170 L1702 157 H1725 V192 Z" fill="#fafafa"/><path d="M1702 156.8 H1725 V192 H1680 V182" fill="none" stroke="#3b3a39" stroke-width="1.5"/><path d="M1684 180.1 H1724.5 M1713 168.4 H1724.5" stroke="#6b6b6b" stroke-width="1"/><path d="M1693.5 168.4 L1702.4 157 H1713.3 V168.4 Z" fill="#83bdea"/><path d="M1691.4 192 V170.5 L1702.4 157 H1713.3 V192 Z M1693.5 168.4 H1713.3 M1691.4 180.1 H1713.3" fill="none" stroke="#0f62b4" stroke-width="1.5"/><path d="M1686.3 148.3 H1696.8 L1688.8 160.2 H1696.8 L1680.2 180.7 H1676.6 L1684.1 165.5 H1676.9 Z" fill="#f7d88a" stroke="#f3f2f1" stroke-width="3.5" stroke-linejoin="round"/><path d="M1686.3 148.3 H1696.8 L1688.8 160.2 H1696.8 L1680.2 180.7 H1676.6 L1684.1 165.5 H1676.9 Z" fill="#f7d88a" stroke="#e06c00" stroke-width="1.4"/><path d="M1786.5 167.6 V151.5 H1818.8 V167.6 Z" fill="#83bdea" stroke="#0f62b4" stroke-width="1.5"/><path d="M1786.5 167.6 V181 M1818.8 167.6 V180.5" stroke="#3b3a39" stroke-width="1.4"/><rect x="1787.2" y="168.3" width="30.8" height="12" fill="#fafafa"/><path d="M1786.5 181 H1806 L1813.2 189.3 L1806 197.3 H1786.5 Z" fill="#83bdea" stroke="#0f62b4" stroke-width="1.5"/><path d="M1808 179.8 L1829 200.6 M1829 179.8 L1808 200.6" stroke="#e8262b" stroke-width="1.5"/><path d="M1917.5 154.8 H1881.8 V168.8 H1912" fill="#fafafa" stroke="#3b3a39" stroke-width="1.5"/><path d="M1908.5 178.5 H1881.8 V192 H1908.5" fill="#fafafa" stroke="#3b3a39" stroke-width="1.5"/><path d="M1908 160.5 L1916 168 L1930.5 153.4" fill="none" stroke="#2e9e4a" stroke-width="1.5"/><circle cx="1918.6" cy="185.3" r="7.8" fill="#fafafa" stroke="#e8262b" stroke-width="1.5"/><path d="M1913.2 179.8 L1924 190.8" stroke="#e8262b" stroke-width="1.5"/><path d="M2043.1 152.8 H2032.8 V162.8 M2032.8 182.3 V192.3 H2043.1" fill="none" stroke="#6e6e6e" stroke-width="1.3"/><rect x="2026.5" y="166.2" width="12.6" height="12.6" fill="#fafafa" stroke="#3b3a39" stroke-width="1.5"/><path d="M2032.8 168.8 V176.2 M2029.1 172.5 H2036.5" stroke="#1a86d0" stroke-width="1.5"/><rect x="2047.8" y="153" width="15.6" height="39.2" fill="#fafafa" stroke="#3b3a39" stroke-width="1.5"/><path d="M2048 162.6 H2063 M2048 172.8 H2063 M2048 182.6 H2063" stroke="#3b3a39" stroke-width="1.2"/><path d="M2040 245 L2044.3 249.3 L2048.6 245" fill="none" stroke="#242424" stroke-width="1.5"/><clipPath id="cl"><rect x="2090" y="140" width="36" height="130"/></clipPath><g clip-path="url(#cl)"><path d="M2130 152.8 H2117 V162.8 M2117 182.3 V192.3 H2130" fill="none" stroke="#6e6e6e" stroke-width="1.3"/><rect x="2110.3" y="166" width="13" height="12.8" fill="#fafafa" stroke="#e8262b" stroke-width="1.5"/><path d="M2110.5 178.5 L2123 166.5" stroke="#e8262b" stroke-width="1.4"/><path d="M2123 245 L2127.3 249.3" fill="none" stroke="#242424" stroke-width="1.5"/></g><path d="M192.5 314.5 L196.7 319 L200.9 314.5" stroke="#242424" stroke-width="1.8" fill="none"/><path d="M237 305.8 L256.2 324.2 M256.2 305.8 L237 324.2" stroke="#a6a6a6" stroke-width="1.5"/><path d="M281.3 313.5 L290 322 L307.4 305.8" stroke="#a6a6a6" stroke-width="1.5" fill="none"/><path d="M2133 311.6 L2140.4 319.5 L2147.8 311.6" stroke="#242424" stroke-width="1.6" fill="none"/><path d="M55 351.3 V374.8 H31.4 Z" fill="#bfbfbf"/><path d="M277.6 484.5 L283.1 490 L288.6 484.5" stroke="#222" stroke-width="1.5" fill="none"/><path d="M614.8000000000001 488.3 L618.0 492.8 L621.2 488.3" stroke="#222" stroke-width="1.3" fill="none"/><path d="M622.8000000000001 479.8 H633.5 V481.6 L629.6 485.5 V491 H626.8000000000001 V485.5 L622.8000000000001 481.6 Z" stroke="#222" stroke-width="1.4" fill="#fff" stroke-linejoin="round"/><path d="M907.5 484.5 L913.0 490 L918.5 484.5" stroke="#222" stroke-width="1.5" fill="none"/><path d="M1201.7 488.3 L1204.9 492.8 L1208.1 488.3" stroke="#222" stroke-width="1.3" fill="none"/><path d="M1209.7 479.8 H1220.4 V481.6 L1216.5 485.5 V491 H1213.7 V485.5 L1209.7 481.6 Z" stroke="#222" stroke-width="1.4" fill="#fff" stroke-linejoin="round"/><path d="M2141.2 395 L2147.1 388.4 L2153 395 Z" fill="#7a7a7a"/><path d="M2141.2 1134.5 L2147.1 1141 L2153 1134.5 Z" fill="#7a7a7a"/><path d="M76.5 1156.5 L70 1162.3 L76.5 1168 Z" fill="#555"/><path d="M2119.5 1156.5 L2126 1162.3 L2119.5 1168 Z" fill="#555"/><path d="M30 1191.7 L19.8 1199.2 L30 1206.7" stroke="#b5b5b5" stroke-width="1.4" fill="none"/><path d="M73.5 1191.7 L83.5 1199.2 L73.5 1206.7" stroke="#b5b5b5" stroke-width="1.4" fill="none"/><path d="M120.7 1192.3 H141 M120.7 1199.2 H141 M120.7 1206 H141" stroke="#444" stroke-width="1.7" fill="none"/><path d="M293 1191 V1208.3 M283.7 1199.6 H302.3" stroke="#444" stroke-width="1.7" fill="none"/><path d="M1650 1245.5 L1654.2 1250.5 L1658.4 1245.5" stroke="#444" stroke-width="1.8" fill="none"/><path d="M2122.8 1236.7 V1255 M2113.3 1245.8 H2132.3" stroke="#444" stroke-width="1.6" fill="none"/></svg>
</body></html>
